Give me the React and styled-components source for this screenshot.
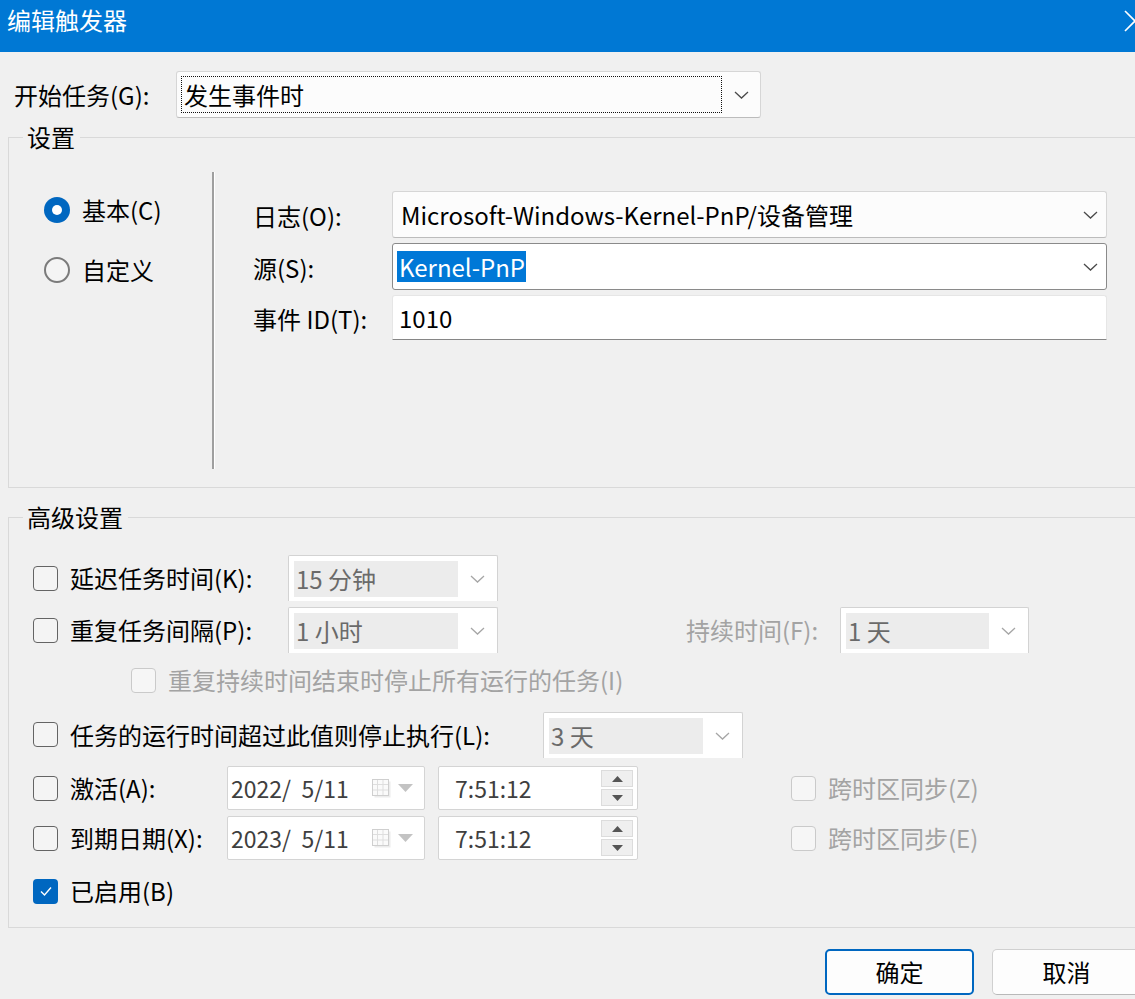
import React from "react";
import styled, { createGlobalStyle, css } from "styled-components";

const GlobalStyle = createGlobalStyle`
  html, body {
    margin: 0;
    padding: 0;
    background: #f0f0f0;
  }
  body {
    font-family: "Noto Sans CJK SC", "Noto Sans", sans-serif;
  }
`;

const Window = styled.div`
  width: 1135px;
  height: 999px;
  overflow: hidden;
  background: #f0f0f0;
  color: #000;
  font-size: 24px;
`;

const TitleBar = styled.div`
  height: 52px;
  background: #0078d4;
  color: #fff;
  display: flex;
  align-items: flex-start;
  justify-content: space-between;
  padding-left: 7px;
  overflow: hidden;
`;

const TitleText = styled.span`
  line-height: 30px;
  margin-top: 5px;
`;

const CloseIcon = styled.svg`
  flex: none;
  margin-top: 10px;
  margin-right: -11px;
`;

const StartRow = styled.div`
  display: flex;
  align-items: center;
  margin-top: 19px;
  padding-left: 14px;
`;

const Label = styled.span`
  flex: none;
  width: ${(p) => (p.$w ? `${p.$w}px` : "auto")};
  margin-left: ${(p) => p.$ml || 0}px;
  color: ${(p) => (p.$disabled ? "#a3a3a3" : "#000")};
  white-space: nowrap;
  line-height: 30px;
`;

const Combo = styled.div`
  box-sizing: border-box;
  flex: none;
  display: flex;
  align-items: center;
  width: ${(p) => p.$w}px;
  height: ${(p) => p.$h}px;
  padding-left: ${(p) => p.$pl ?? 8}px;
  background: ${(p) => (p.$focus ? "#fff" : "#fcfcfc")};
  border: 1px solid ${(p) => (p.$focus ? "#8a8a8a" : "#d6d6d6")};
  border-bottom-color: ${(p) => (p.$focus ? "#8a8a8a" : "#bcbcbc")};
  border-radius: 3px;
`;

const FocusBox = styled.div`
  box-sizing: border-box;
  width: 541px;
  height: 37px;
  border: 1px dotted #111;
  display: flex;
  align-items: center;
  padding-left: 2px;
`;

const ComboValue = styled.span`
  flex: 1;
  line-height: 30px;
  white-space: nowrap;
`;

const Selected = styled.span`
  background: #0078d7;
  color: #fff;
  padding: 0 1px 0 2px;
  line-height: 31px;
  display: inline-block;
`;

const ChevronBox = styled.span`
  flex: ${(p) => (p.$fill ? 1 : "none")};
  display: flex;
  justify-content: center;
  align-items: center;
  margin-right: ${(p) => p.$mr || 0}px;
`;

const TextBox = styled.div`
  box-sizing: border-box;
  width: 715px;
  height: 45px;
  display: flex;
  align-items: center;
  padding-left: 6px;
  background: #fff;
  border: 1px solid #e6e6e6;
  border-bottom: 1px solid #868686;
  border-radius: 3px 3px 0 0;
  line-height: 30px;
`;

const GroupBox = styled.section`
  position: relative;
  box-sizing: border-box;
  margin: ${(p) => p.$mt}px -10px 0 8px;
  height: ${(p) => p.$h}px;
  border: 1px solid #d9d9d9;
  border-right: none;
`;

const GroupTitle = styled.span`
  position: absolute;
  top: -16px;
  left: 14px;
  padding: 0 5px 0 4px;
  background: #f0f0f0;
  line-height: 30px;
`;

const BasicLayout = styled.div`
  display: flex;
`;

const RadioCol = styled.div`
  box-sizing: border-box;
  width: 203px;
  padding: 42px 0 0 35px;
`;

const RadioRow = styled.div`
  display: flex;
  align-items: center;
  gap: 12px;
  height: 60px;
  line-height: 30px;
`;

const Radio = styled.span`
  box-sizing: border-box;
  flex: none;
  width: 26px;
  height: 26px;
  border-radius: 50%;
  ${(p) =>
    p.$checked
      ? css`
          background: #0067c0;
          display: flex;
          align-items: center;
          justify-content: center;
          &::after {
            content: "";
            width: 10px;
            height: 10px;
            border-radius: 50%;
            background: #fff;
          }
        `
      : css`
          border: 2px solid #7b7b7b;
          background: #f4f4f4;
        `}
`;

const Separator = styled.div`
  flex: none;
  width: 0;
  margin-top: 34px;
  height: 297px;
  border-left: 2px solid #9f9f9f;
  border-right: 1px solid #fff;
`;

const FieldGrid = styled.div`
  display: grid;
  grid-template-columns: 139px 715px;
  grid-template-rows: 47px 47px 45px;
  row-gap: 5px;
  padding: 53px 0 0 38px;
  align-items: center;
`;

const FieldLabel = styled.span`
  line-height: 30px;
  padding-top: 2px;
  white-space: nowrap;
`;

const AdvancedBody = styled.div`
  padding-left: 24px;
`;

const Row = styled.div`
  display: flex;
  align-items: center;
  margin-top: ${(p) => p.$mt}px;
  height: ${(p) => p.$h}px;
  padding-left: ${(p) => p.$indent || 0}px;
`;

const Check = styled.span`
  box-sizing: border-box;
  flex: none;
  width: 25px;
  height: 25px;
  border-radius: 4px;
  margin-right: ${(p) => p.$gap ?? 12}px;
  display: flex;
  align-items: center;
  justify-content: center;
  border: ${(p) =>
    p.$checked ? "none" : p.$disabled ? "1.5px solid #cacaca" : "1.5px solid #646464"};
  background: ${(p) => (p.$checked ? "#0067c0" : p.$disabled ? "#f6f6f6" : "#f4f4f4")};
`;

const DropBox = styled.div`
  box-sizing: border-box;
  flex: none;
  display: flex;
  align-items: flex-start;
  width: ${(p) => p.$w}px;
  height: ${(p) => p.$h}px;
  padding: 5px 0 0 5px;
  background: #fff;
  border: 1px solid #d3d3d3;
  border-bottom: none;
  border-radius: 2px 2px 0 0;
`;

const DropValue = styled.span`
  box-sizing: border-box;
  width: ${(p) => p.$w}px;
  height: 36px;
  padding-left: 2px;
  background: #ececec;
  color: #6a6a6a;
  line-height: 36px;
  white-space: nowrap;
`;

const DropArrow = styled.span`
  flex: 1;
  height: 36px;
  display: flex;
  align-items: center;
  justify-content: center;
`;

const DateBox = styled.div`
  box-sizing: border-box;
  flex: none;
  display: flex;
  align-items: center;
  width: ${(p) => p.$w}px;
  height: 44px;
  margin-left: ${(p) => p.$ml || 0}px;
  padding-left: ${(p) => p.$pl || 3}px;
  background: #fff;
  border: 1px solid #d4d4d4;
  border-radius: 2px;
  color: #3f3f3f;
`;

const DateText = styled.span`
  flex: 1;
  white-space: pre;
  line-height: 30px;
  font-size: 23px;
`;

const CalendarIcons = styled.span`
  display: flex;
  align-items: center;
  gap: 6px;
  margin-right: 11px;
`;

const Spin = styled.span`
  display: flex;
  flex-direction: column;
  gap: 2px;
  margin-right: 4px;
`;

const SpinButton = styled.span`
  box-sizing: border-box;
  width: 32px;
  height: 17px;
  display: flex;
  align-items: center;
  justify-content: center;
  background: #efefef;
  border: 1px solid #dcdcdc;
`;

const ButtonRow = styled.div`
  display: flex;
  justify-content: flex-end;
  gap: 18px;
  margin: 21px -6px 0 0;
`;

const Button = styled.button`
  box-sizing: border-box;
  width: 149px;
  height: 46px;
  font-family: inherit;
  font-size: 24px;
  color: #000;
  background: #fdfdfd;
  border-radius: 5px;
  padding: 0;
  line-height: 30px;
  border: ${(p) => (p.$primary ? "2px solid #0067c0" : "1px solid #d0d0d0")};
  ${(p) => !p.$primary && css`border-bottom-color: #b9b9b9;`}
`;

const Chevron = ({ color = "#4a4a4a" }) => (
  <svg width="15" height="8" viewBox="0 0 15 8">
    <polyline points="1,1 7.5,7 14,1" fill="none" stroke={color} strokeWidth="1.3" />
  </svg>
);

const Calendar = () => (
  <svg width="20" height="19" viewBox="0 0 20 19">
    <rect x="2.5" y="2.5" width="16" height="16" fill="#ececec" />
    <rect x="0.5" y="0.5" width="16" height="16" fill="#fafafa" stroke="#cfcfcf" />
    <path d="M5.5 1v15M11 1v15M1 5.5h15M1 11h15" stroke="#dedede" strokeWidth="1" />
  </svg>
);

const Triangle = ({ dir = "down", color = "#c3c3c3", w = 15, h = 8 }) => (
  <svg width={w} height={h} viewBox={`0 0 ${w} ${h}`}>
    <polygon
      points={dir === "down" ? `0,0 ${w},0 ${w / 2},${h}` : `0,${h} ${w},${h} ${w / 2},0`}
      fill={color}
    />
  </svg>
);

const Tick = () => (
  <svg width="14" height="12" viewBox="0 0 14 12">
    <polyline points="2,6.5 5.5,10 12,2.5" fill="none" stroke="#fff" strokeWidth="1.4" />
  </svg>
);

const Drop = ({ w, value }) => (
  <DropBox $w={w} $h={46}>
    <DropValue $w={w - 46}>{value}</DropValue>
    <DropArrow>
      <Chevron color="#a6a6a6" />
    </DropArrow>
  </DropBox>
);

const DateField = ({ value }) => (
  <DateBox $w={198}>
    <DateText>{value}</DateText>
    <CalendarIcons>
      <Calendar />
      <Triangle />
    </CalendarIcons>
  </DateBox>
);

const TimeField = ({ value }) => (
  <DateBox $w={200} $ml={13} $pl={16}>
    <DateText>{value}</DateText>
    <Spin>
      <SpinButton>
        <Triangle dir="up" color="#555" w={11} h={6} />
      </SpinButton>
      <SpinButton>
        <Triangle color="#555" w={11} h={6} />
      </SpinButton>
    </Spin>
  </DateBox>
);

export default function App() {
  return (
    <Window>
      <GlobalStyle />
      <TitleBar>
        <TitleText>编辑触发器</TitleText>
        <CloseIcon width="22" height="22" viewBox="0 0 22 22">
          <path d="M1 1L21 21M21 1L1 21" stroke="#fff" strokeWidth="1.6" />
        </CloseIcon>
      </TitleBar>

      <StartRow>
        <Label $w={162}>开始任务(G):</Label>
        <Combo $w={585} $h={47} $pl={4}>
          <FocusBox>
            <ComboValue>发生事件时</ComboValue>
          </FocusBox>
          <ChevronBox $fill>
            <Chevron />
          </ChevronBox>
        </Combo>
      </StartRow>

      <GroupBox $mt={19} $h={351}>
        <GroupTitle>设置</GroupTitle>
        <BasicLayout>
          <RadioCol>
            <RadioRow>
              <Radio $checked />
              基本(C)
            </RadioRow>
            <RadioRow>
              <Radio />
              自定义
            </RadioRow>
          </RadioCol>
          <Separator />
          <FieldGrid>
            <FieldLabel>日志(O):</FieldLabel>
            <Combo $w={715} $h={47}>
              <ComboValue>Microsoft-Windows-Kernel-PnP/设备管理</ComboValue>
              <ChevronBox $mr={8}>
                <Chevron />
              </ChevronBox>
            </Combo>
            <FieldLabel>源(S):</FieldLabel>
            <Combo $w={715} $h={47} $pl={4} $focus>
              <ComboValue>
                <Selected>Kernel-PnP</Selected>
              </ComboValue>
              <ChevronBox $mr={8}>
                <Chevron />
              </ChevronBox>
            </Combo>
            <FieldLabel>事件 ID(T):</FieldLabel>
            <TextBox>1010</TextBox>
          </FieldGrid>
        </BasicLayout>
      </GroupBox>

      <GroupBox $mt={29} $h={411}>
        <GroupTitle>高级设置</GroupTitle>
        <AdvancedBody>
          <Row $mt={37} $h={46}>
            <Check />
            <Label $w={218}>延迟任务时间(K):</Label>
            <Drop w={210} value="15 分钟" />
          </Row>
          <Row $mt={6} $h={46}>
            <Check />
            <Label $w={218}>重复任务间隔(P):</Label>
            <Drop w={210} value="1 小时" />
            <Label $w={154} $ml={188} $disabled>
              持续时间(F):
            </Label>
            <Drop w={189} value="1 天" />
          </Row>
          <Row $mt={7} $h={40} $indent={98}>
            <Check $disabled />
            <Label $disabled>重复持续时间结束时停止所有运行的任务(I)</Label>
          </Row>
          <Row $mt={12} $h={45}>
            <Check />
            <Label $w={473}>任务的运行时间超过此值则停止执行(L):</Label>
            <Drop w={200} value="3 天" />
          </Row>
          <Row $mt={9} $h={44}>
            <Check />
            <Label $w={157}>激活(A):</Label>
            <DateField value="2022/  5/11" />
            <TimeField value="7:51:12" />
            <Label $ml={153}>
              <Check $disabled as="span" />
            </Label>
            <Label $disabled>跨时区同步(Z)</Label>
          </Row>
          <Row $mt={6} $h={44}>
            <Check />
            <Label $w={157}>到期日期(X):</Label>
            <DateField value="2023/  5/11" />
            <TimeField value="7:51:12" />
            <Label $ml={153}>
              <Check $disabled as="span" />
            </Label>
            <Label $disabled>跨时区同步(E)</Label>
          </Row>
          <Row $mt={11} $h={40}>
            <Check $checked>
              <Tick />
            </Check>
            <Label>已启用(B)</Label>
          </Row>
        </AdvancedBody>
      </GroupBox>

      <ButtonRow>
        <Button $primary>确定</Button>
        <Button>取消</Button>
      </ButtonRow>
    </Window>
  );
}
